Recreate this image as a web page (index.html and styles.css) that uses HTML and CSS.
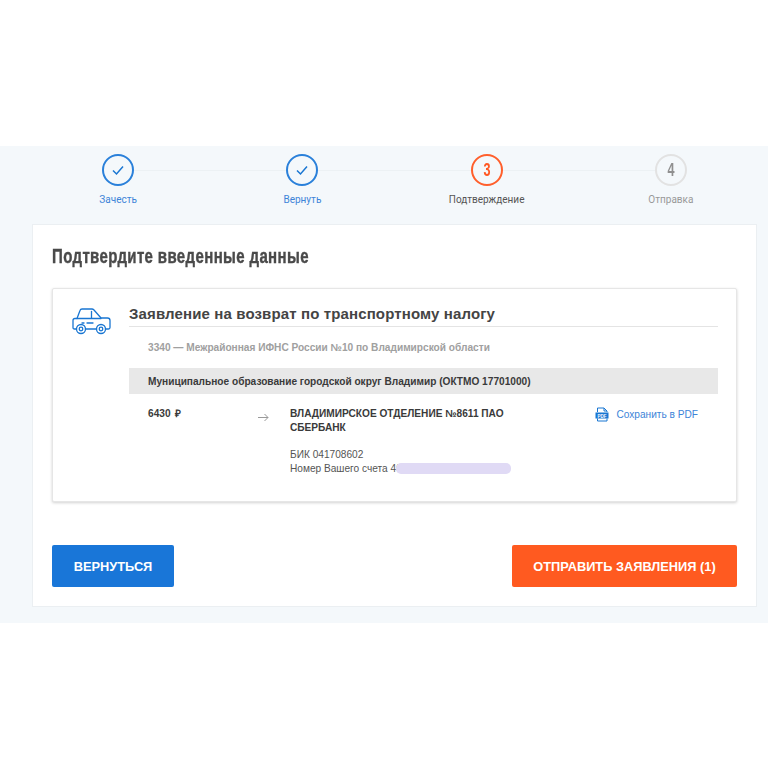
FILE: index.html
```html
<!DOCTYPE html>
<html lang="ru">
<head>
    <meta charset="UTF-8">
    <meta name="viewport" content="width=device-width, initial-scale=1.0">
    <title>Подтверждение</title>
    <link rel="stylesheet" href="styles.css">
</head>
<body>
    <div class="page">
        <div class="steps">
            <div class="step step-done">
                <div class="step-circle">
                    <svg width="14" height="14" viewBox="0 0 14 14" fill="none" stroke="#1976d2" stroke-width="1.5"><path d="M2 7.5 L5.5 11 L12 3.5"/></svg>
                </div>
                <div class="step-label">Зачесть</div>
            </div>
            <div class="step step-done">
                <div class="step-circle">
                    <svg width="14" height="14" viewBox="0 0 14 14" fill="none" stroke="#1976d2" stroke-width="1.5"><path d="M2 7.5 L5.5 11 L12 3.5"/></svg>
                </div>
                <div class="step-label">Вернуть</div>
            </div>
            <div class="step step-active">
                <div class="step-circle"><span class="step-num">3</span></div>
                <div class="step-label">Подтверждение</div>
            </div>
            <div class="step step-todo">
                <div class="step-circle"><span class="step-num">4</span></div>
                <div class="step-label">Отправка</div>
            </div>
        </div>

        <div class="card">
            <h1 class="card-title">Подтвердите введенные данные</h1>

            <div class="panel">
                <div class="panel-icon">
                    <svg width="39" height="27" viewBox="0 0 39 27" fill="none" stroke="#1976d2" stroke-width="1.3" stroke-linejoin="round" stroke-linecap="round">
                        <path d="M4.500 21 H2.500 Q1 21 1 19.500 V12.500 Q1 10.500 3 10.500 H5 L8 2.500 Q8.500 1 10 1 H20 Q21 1 22 2 L29 10 H35.500 Q38 10 38 12.500 V19.500 Q38 21 36.500 21 H33.500"/>
                        <path d="M13.500 21 H24.500"/>
                        <path d="M5 10.500 H29"/>
                        <path d="M19.500 3.500 V10"/>
                        <path d="M10 15 H12 M15 15 H21"/>
                        <circle cx="9" cy="21" r="4.500"/>
                        <circle cx="9" cy="21" r="1.800"/>
                        <circle cx="29" cy="21" r="4.500"/>
                        <circle cx="29" cy="21" r="1.800"/>
                    </svg>
                </div>
                <div class="panel-body">
                    <h2 class="panel-title">Заявление на возврат по транспортному налогу</h2>
                    <div class="inspection">3340 — Межрайонная ИФНС России №10 по Владимирской области</div>
                    <div class="band">Муниципальное образование городской округ Владимир (ОКТМО 17701000)</div>
                    <div class="payment">
                        <div class="amount">6430 <span class="rub">₽</span></div>
                        <div class="arrow">
                            <svg width="11" height="9" viewBox="0 0 11 9" fill="none" stroke="#9a9a9a" stroke-width="1"><path d="M0 4.500 H10 M6.500 1 L10 4.500 L6.500 8"/></svg>
                        </div>
                        <div class="bank">
                            <div class="bank-name">ВЛАДИМИРСКОЕ ОТДЕЛЕНИЕ №8611 ПАО СБЕРБАНК</div>
                            <div class="bank-info">БИК 041708602</div>
                            <div class="bank-info">Номер Вашего счета 40<span class="masked"></span></div>
                        </div>
                        <a class="save" href="#">
                            <svg width="14" height="15" viewBox="0 0 14 15" fill="none" stroke="#1976d2" stroke-width="1">
                                <path d="M2.500 5 V1 H9 L12 4 V5 M9 1 V4 H12 M2.500 11.500 V14 H12 V11.500"/>
                                <rect x="0.500" y="5.500" width="13" height="6" fill="#1976d2" stroke="none"/>
                                <text x="7" y="10.500" text-anchor="middle" class="pdf-mark">PDF</text>
                            </svg>
                            Сохранить в PDF
                        </a>
                    </div>
                </div>
            </div>

            <div class="actions">
                <button class="btn btn-back">ВЕРНУТЬСЯ</button>
                <button class="btn btn-send">ОТПРАВИТЬ ЗАЯВЛЕНИЯ (1)</button>
            </div>
        </div>
    </div>
</body>
</html>
```

FILE: styles.css
```css
body {
    margin: 0;
    padding: 146px 0 0;
    background: #fff;
    font-family: "Liberation Sans", Arial, sans-serif;
    color: #444;
}

.page {
    height: 477px;
    box-sizing: border-box;
    background: #f4f8fb;
    padding: 8px 11px 0 32px;
}

/* steps */
.steps {
    display: flex;
    height: 70px;
    margin: 0 -6px 0 -6px;
    position: relative;
}
.steps::before {
    content: "";
    position: absolute;
    top: 16px;
    left: 92px;
    right: 92px;
    height: 1px;
    background: #ecf1f4;
}
.step {
    flex: 1;
    display: flex;
    flex-direction: column;
    align-items: center;
    position: relative;
}
.step-circle {
    width: 32px;
    height: 32px;
    box-sizing: border-box;
    border-radius: 50%;
    border: 2px solid #2a80da;
    background: #f4f8fb;
    display: flex;
    align-items: center;
    justify-content: center;
}
.step-num {
    display: inline-block;
    font-size: 18px;
    font-weight: bold;
    transform: scaleX(0.7);
}
.step-label {
    margin-top: 7px;
    font-family: Roboto, sans-serif;
    font-size: 10px;
    line-height: 13px;
    color: #3d84d8;
}
.step-active .step-circle {
    border-color: #ff5f2c;
    color: #ff5722;
}
.step-active .step-label {
    color: #555;
}
.step-todo .step-circle {
    border-color: #e2e2e2;
    color: #8f8f8f;
}
.step-todo .step-label {
    color: #999;
}

/* card */
.card {
    height: 383px;
    box-sizing: border-box;
    background: #fff;
    border: 1px solid #ebeff2;
    padding: 19px 19px 0;
}
.card-title {
    margin: 0 0 19px;
    font-size: 20px;
    line-height: 25px;
    font-weight: bold;
    letter-spacing: 0.5px;
    white-space: nowrap;
    color: #4a4a4a;
    -webkit-text-stroke: 0.4px #4a4a4a;
    transform: scaleX(0.75);
    transform-origin: left center;
}

.panel {
    display: flex;
    height: 214px;
    box-sizing: border-box;
    background: #fff;
    border: 1px solid #e6e6e6;
    border-radius: 2px;
    box-shadow: 0 1px 3px rgba(0, 0, 0, 0.18);
    padding: 15px 18px 0 19px;
}
.panel-icon {
    width: 57px;
    flex: none;
    padding-top: 4px;
}
.panel-body {
    flex: 1;
    min-width: 0;
}
.panel-title {
    margin: 0;
    height: 22px;
    border-bottom: 1px solid #e4e4e4;
    font-size: 15px;
    line-height: 20px;
    font-weight: bold;
    letter-spacing: 0.13px;
    color: #444;
}
.inspection {
    padding-left: 19px;
    margin-top: 14px;
    font-size: 10.15px;
    line-height: 13px;
    font-weight: bold;
    color: #a0a0a0;
}
.band {
    margin-top: 14px;
    height: 26px;
    box-sizing: border-box;
    padding: 1px 0 0 19px;
    background: #e8e8e8;
    font-size: 10.15px;
    line-height: 25px;
    font-weight: bold;
    color: #3a3a3a;
}
.payment {
    display: flex;
    padding: 13px 20px 0 19px;
}
.amount {
    width: 110px;
    flex: none;
    font-size: 10.15px;
    line-height: 14px;
    font-weight: bold;
    color: #3a3a3a;
}
.rub {
    margin-left: 2px;
}
.arrow {
    width: 32px;
    flex: none;
    line-height: 14px;
    padding-top: 3px;
}
.bank {
    width: 225px;
    flex: none;
    font-size: 10.15px;
    line-height: 14px;
}
.bank-name {
    font-weight: bold;
    color: #3a3a3a;
    margin-bottom: 13px;
}
.bank-info {
    color: #555;
    white-space: nowrap;
}
.masked {
    display: inline-block;
    width: 115px;
    height: 11px;
    margin-left: -6px;
    vertical-align: -2px;
    border-radius: 5px;
    background: #e0daf5;
    filter: blur(0.6px);
}
.save {
    margin-left: auto;
    display: flex;
    gap: 7px;
    white-space: nowrap;
    align-items: flex-start;
    font-size: 10.15px;
    line-height: 15px;
    color: #3d84d8;
    text-decoration: none;
}
.pdf-mark {
    font-family: "Liberation Sans", Arial, sans-serif;
    font-size: 4.500px;
    font-weight: bold;
    fill: #fff;
    stroke: none;
}

.actions {
    display: flex;
    justify-content: space-between;
    margin-top: 43px;
}
.btn {
    height: 42px;
    border: none;
    border-radius: 2px;
    color: #fff;
    font-family: "Liberation Sans", Arial, sans-serif;
    font-size: 12.800px;
    font-weight: bold;
    padding: 0;
}
.btn-back {
    width: 122px;
    background: #1976d8;
}
.btn-send {
    width: 225px;
    background: #ff5a20;
}
```
